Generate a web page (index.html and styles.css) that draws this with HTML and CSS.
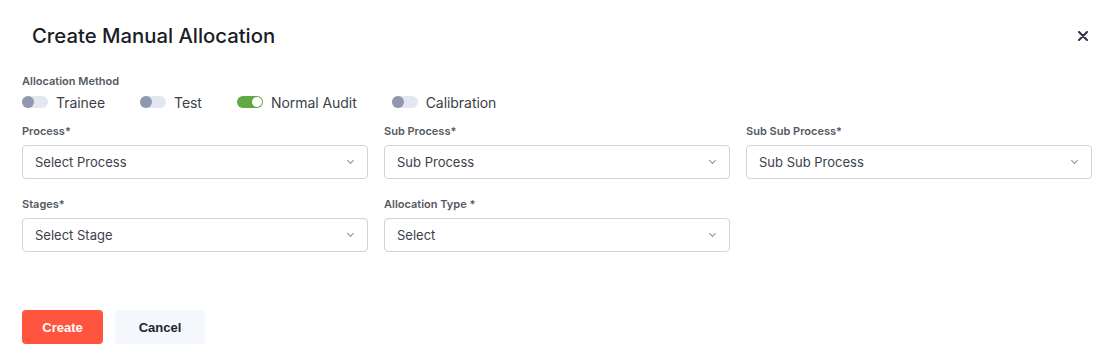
FILE: index.html
```html
<!DOCTYPE html>
<html lang="en">
<head>
    <meta charset="UTF-8">
    <meta name="viewport" content="width=device-width, initial-scale=1.0">
    <title>Create Manual Allocation</title>
    <link rel="stylesheet" href="styles.css">
</head>
<body>
    <div class="modal">
        <div class="modal-header">
            <h2 class="modal-title">Create Manual Allocation</h2>
            <button type="button" class="close-btn" aria-label="Close">
                <svg width="10" height="10" viewBox="0 0 10 10">
                    <path d="M1 1 L9 9 M9 1 L1 9" stroke="#2b3140" stroke-width="2" stroke-linecap="round"/>
                </svg>
            </button>
        </div>

        <div class="modal-body">
            <div class="field-label">Allocation Method</div>
            <div class="methods">
                <label class="method">
                    <span class="toggle"><span class="knob"></span></span>
                    Trainee
                </label>
                <label class="method">
                    <span class="toggle"><span class="knob"></span></span>
                    Test
                </label>
                <label class="method">
                    <span class="toggle on"><span class="knob"></span></span>
                    Normal Audit
                </label>
                <label class="method">
                    <span class="toggle"><span class="knob"></span></span>
                    Calibration
                </label>
            </div>

            <div class="grid">
                <div class="field">
                    <div class="field-label">Process*</div>
                    <div class="select">Select Process <span class="caret"></span></div>
                </div>
                <div class="field">
                    <div class="field-label">Sub Process*</div>
                    <div class="select">Sub Process <span class="caret"></span></div>
                </div>
                <div class="field">
                    <div class="field-label">Sub Sub Process*</div>
                    <div class="select">Sub Sub Process <span class="caret"></span></div>
                </div>
                <div class="field">
                    <div class="field-label">Stages*</div>
                    <div class="select">Select Stage <span class="caret"></span></div>
                </div>
                <div class="field">
                    <div class="field-label">Allocation Type *</div>
                    <div class="select">Select <span class="caret"></span></div>
                </div>
            </div>
        </div>

        <div class="modal-footer">
            <button type="button" class="btn btn-create">Create</button>
            <button type="button" class="btn btn-cancel">Cancel</button>
        </div>
    </div>
</body>
</html>
```

FILE: styles.css
```css
body {
    margin: 0;
    padding: 0;
    background-color: white;
    font-family: Inter, "Noto Sans", sans-serif;
    color: #1f2430;
}

.modal {
    width: 1108px;
    height: 358px;
    box-sizing: border-box;
}

.modal-header {
    display: flex;
    align-items: center;
    justify-content: space-between;
    height: 74px;
    padding: 0 17px 3px 32px;
    box-sizing: border-box;
}

.modal-title {
    margin: 0;
    font-size: 20.3px;
    font-weight: 500;
    color: #1a1d26;
}

.close-btn {
    border: none;
    background: none;
    padding: 0;
    width: 16px;
    height: 16px;
    display: flex;
    align-items: center;
    justify-content: center;
    cursor: pointer;
}

.modal-body {
    padding: 0 16px 0 22px;
}

.field-label {
    font-size: 11px;
    font-weight: 600;
    color: #555a63;
    line-height: 14px;
    height: 14px;
}

.methods {
    display: flex;
    align-items: center;
    gap: 35px;
    height: 22px;
    margin-top: 3px;
    margin-bottom: 11px;
}

.method {
    display: flex;
    align-items: center;
    gap: 8px;
    font-size: 14px;
    letter-spacing: -0.05px;
    color: #3b3f47;
}

.toggle {
    position: relative;
    width: 26px;
    height: 12px;
    border-radius: 6px;
    background-color: #e3e7f0;
}

.toggle .knob {
    position: absolute;
    left: 0;
    top: 0;
    width: 12px;
    height: 12px;
    border-radius: 50%;
    background-color: #8f98ae;
}

.toggle.on {
    background-color: #62a844;
}

.toggle.on .knob {
    left: 15px;
    top: 1px;
    width: 10px;
    height: 10px;
    background-color: white;
}

.grid {
    display: grid;
    grid-template-columns: repeat(3, 1fr);
    column-gap: 16px;
    row-gap: 18px;
}

.field .field-label {
    margin-bottom: 7px;
}

.select {
    display: flex;
    align-items: center;
    justify-content: space-between;
    height: 34px;
    box-sizing: border-box;
    padding: 0 14px 0 12px;
    border: 1px solid #cfd3da;
    border-radius: 4px;
    font-size: 13px;
    color: #3d4149;
}

.caret {
    width: 4px;
    height: 4px;
    border-right: 1px solid #8a8f99;
    border-bottom: 1px solid #8a8f99;
    transform: rotate(45deg);
    margin-top: -3px;
}

.modal-footer {
    display: flex;
    gap: 12px;
    padding: 58px 22px 0 22px;
}

.btn {
    height: 34px;
    border: none;
    border-radius: 4px;
    font-family: "Liberation Sans", Arial, sans-serif;
    font-size: 13px;
    font-weight: bold;
    cursor: pointer;
}

.btn-create {
    width: 81px;
    background-color: #ff543d;
    color: white;
}

.btn-cancel {
    width: 90px;
    background-color: #f4f7fb;
    color: #1f2430;
}
```
